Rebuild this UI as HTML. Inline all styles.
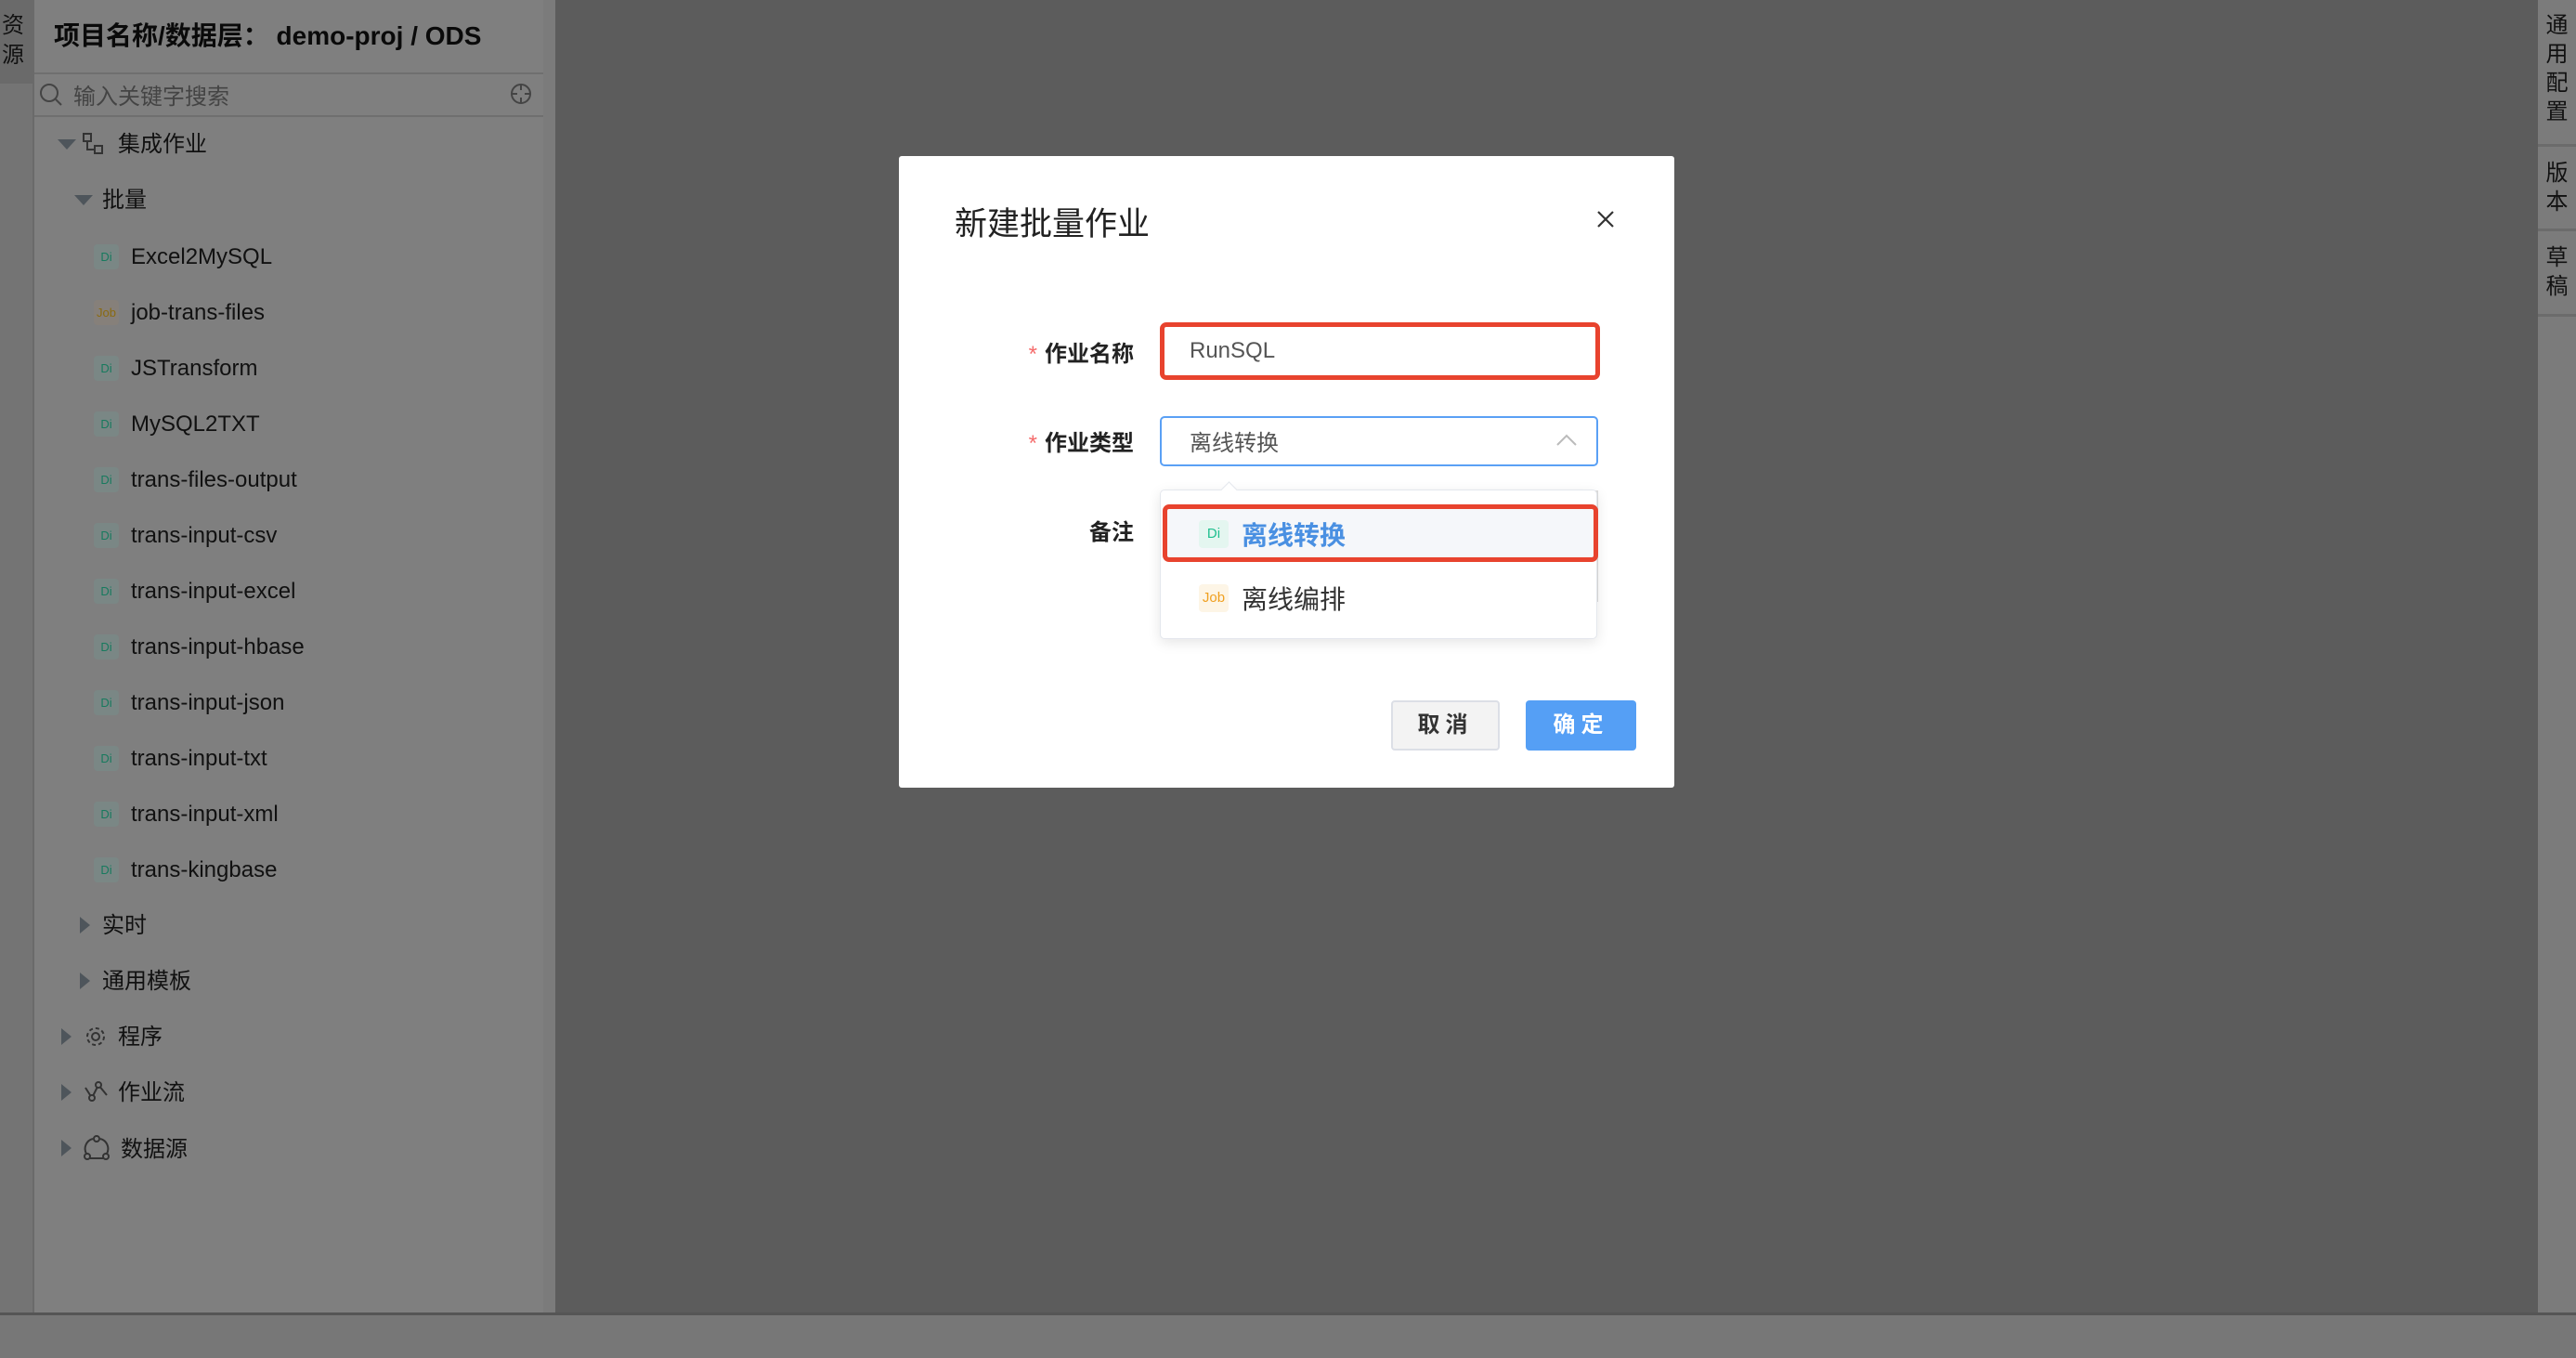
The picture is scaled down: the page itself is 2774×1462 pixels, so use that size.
<!DOCTYPE html>
<html><head><meta charset="utf-8"><style>
*{box-sizing:border-box;margin:0;padding:0}
body{width:2774px;height:1462px;position:relative;overflow:hidden;background:#5c5c5c;font-family:"Liberation Sans","Noto Sans CJK SC",sans-serif;color:#111}
.abs{position:absolute}
.lstrip{left:0;top:0;width:37px;height:1414px;background:#747474;border-right:2px solid #6a6a6a}
.ltab{left:0;top:0;width:37px;height:90px;background:#6a6a6a;font-size:24px;line-height:32px;padding:12px 0 0 2px;color:#111}
.side{left:37px;top:0;width:561px;height:1414px;background:#7f7f7f}
.side .sb{position:absolute;right:0;top:0;width:13px;height:100%;background:#7b7b7b}
.title{left:58px;top:17px;font-size:28px;font-weight:bold;color:#0a0a0a}
.search{left:37px;top:78px;width:548px;height:48px;border-top:2px solid #6f6f6f;border-bottom:2px solid #6f6f6f}
.row{position:absolute;font-size:24px;line-height:30px;color:#111}
.ic{position:absolute;width:27px;height:27px;border-radius:4px;font-size:13px;line-height:27px;text-align:center}
.di{background:#7a8785;color:#177a5e}
.jb{background:#86807a;color:#8a6a10}
.tri{position:absolute;width:0;height:0}
.down{border-left:10px solid transparent;border-right:10px solid transparent;border-top:11px solid #4e555b}
.right{border-top:9px solid transparent;border-bottom:9px solid transparent;border-left:11px solid #4e555b}
.rstrip{left:2733px;top:0;width:41px;height:1414px;background:#7b7b7b}
.rtab{position:absolute;left:0;width:41px;font-size:24px;line-height:31px;text-align:center;border-bottom:3px solid #6b6b6b;color:#111}
.bottom{left:0;top:1413px;width:2774px;height:49px;background:#777;border-top:3px solid #555}
.modal{left:968px;top:168px;width:835px;height:680px;background:#fff;border-radius:3px}
.lbl{position:absolute;font-size:24px;font-weight:bold;color:#222;text-align:right;width:200px}
.lbl b{color:#f56c6c;font-weight:normal;margin-right:8px}
</style></head><body>
<div class="abs lstrip"></div>
<div class="abs ltab">资<br>源</div>
<div class="abs side"><div class="sb"></div></div>
<div class="abs title">项目名称/数据层：&nbsp;demo-proj / ODS</div>
<div class="abs search">
<svg class="abs" style="left:4px;top:8px" width="28" height="28" viewBox="0 0 28 28"><circle cx="12" cy="12" r="9" fill="none" stroke="#444" stroke-width="2"/><path d="M19 19l6 6" stroke="#444" stroke-width="2"/></svg>
<div class="abs" style="left:42px;top:4px;font-size:24px;color:#444">输入关键字搜索</div>
<svg class="abs" style="left:510px;top:7px" width="28" height="28" viewBox="0 0 28 28"><circle cx="14" cy="14" r="10" fill="none" stroke="#444" stroke-width="2"/><path d="M14 4v6M14 18v6M4 14h6M18 14h6" stroke="#444" stroke-width="2"/></svg>
</div>
<div class="tri down" style="left:62px;top:150px"></div>
<svg class="abs" style="left:88px;top:142px" width="26" height="26" viewBox="0 0 26 26"><rect x="2" y="2" width="8" height="8" fill="none" stroke="#333" stroke-width="2"/><rect x="14" y="15" width="8" height="8" fill="none" stroke="#333" stroke-width="2"/><path d="M6 10v9h8" fill="none" stroke="#333" stroke-width="2"/></svg>
<div class="row" style="left:127px;top:141px">集成作业</div>
<div class="tri down" style="left:80px;top:210px"></div>
<div class="row" style="left:110px;top:201px">批量</div>

<div class="ic di" style="left:101px;top:263px">Di</div><div class="row" style="left:141px;top:262px">Excel2MySQL</div>
<div class="ic jb" style="left:101px;top:323px">Job</div><div class="row" style="left:141px;top:322px">job-trans-files</div>
<div class="ic di" style="left:101px;top:383px">Di</div><div class="row" style="left:141px;top:382px">JSTransform</div>
<div class="ic di" style="left:101px;top:443px">Di</div><div class="row" style="left:141px;top:442px">MySQL2TXT</div>
<div class="ic di" style="left:101px;top:503px">Di</div><div class="row" style="left:141px;top:502px">trans-files-output</div>
<div class="ic di" style="left:101px;top:563px">Di</div><div class="row" style="left:141px;top:562px">trans-input-csv</div>
<div class="ic di" style="left:101px;top:623px">Di</div><div class="row" style="left:141px;top:622px">trans-input-excel</div>
<div class="ic di" style="left:101px;top:683px">Di</div><div class="row" style="left:141px;top:682px">trans-input-hbase</div>
<div class="ic di" style="left:101px;top:743px">Di</div><div class="row" style="left:141px;top:742px">trans-input-json</div>
<div class="ic di" style="left:101px;top:803px">Di</div><div class="row" style="left:141px;top:802px">trans-input-txt</div>
<div class="ic di" style="left:101px;top:863px">Di</div><div class="row" style="left:141px;top:862px">trans-input-xml</div>
<div class="ic di" style="left:101px;top:923px">Di</div><div class="row" style="left:141px;top:922px">trans-kingbase</div>

<div class="tri right" style="left:86px;top:987px"></div><div class="row" style="left:110px;top:982px">实时</div>
<div class="tri right" style="left:86px;top:1047px"></div><div class="row" style="left:110px;top:1042px">通用模板</div>
<div class="tri right" style="left:66px;top:1107px"></div>
<svg class="abs" style="left:90px;top:1103px" width="26" height="26" viewBox="0 0 26 26"><circle cx="13" cy="13" r="4" fill="none" stroke="#333" stroke-width="2"/><circle cx="13" cy="13" r="9" fill="none" stroke="#333" stroke-width="2" stroke-dasharray="4 3"/></svg>
<div class="row" style="left:127px;top:1102px">程序</div>
<div class="tri right" style="left:66px;top:1167px"></div>
<svg class="abs" style="left:90px;top:1163px" width="28" height="26" viewBox="0 0 28 26"><path d="M2 8l7 11 7-14 9 11" fill="none" stroke="#333" stroke-width="2"/><circle cx="9" cy="19" r="3" fill="#7f7f7f" stroke="#333" stroke-width="2"/><circle cx="16" cy="5" r="3" fill="#7f7f7f" stroke="#333" stroke-width="2"/></svg>
<div class="row" style="left:127px;top:1162px">作业流</div>
<div class="tri right" style="left:66px;top:1227px"></div>
<svg class="abs" style="left:89px;top:1221px" width="30" height="30" viewBox="0 0 30 30"><path d="M11 5A11 11 0 0 0 4 21M26 21A11 11 0 0 0 19 5M8 26h14" fill="none" stroke="#333" stroke-width="2"/><circle cx="15" cy="5" r="3" fill="none" stroke="#333" stroke-width="2"/><circle cx="5" cy="24" r="3" fill="none" stroke="#333" stroke-width="2"/><circle cx="25" cy="24" r="3" fill="none" stroke="#333" stroke-width="2"/></svg>
<div class="row" style="left:130px;top:1223px">数据源</div>

<div class="abs rstrip">
<div class="rtab" style="top:0;height:158px;padding-top:12px">通<br>用<br>配<br>置</div>
<div class="rtab" style="top:158px;height:91px;padding-top:13px">版<br>本</div>
<div class="rtab" style="top:249px;height:92px;padding-top:13px">草<br>稿</div>
</div>
<div class="abs bottom"></div>

<div class="abs modal">
<div class="abs" style="left:60px;top:45px;font-size:35px;color:#222">新建批量作业</div>
<svg class="abs" style="left:750px;top:57px" width="22" height="22" viewBox="0 0 22 22"><path d="M3 3l16 16M19 3L3 19" stroke="#333" stroke-width="2.2"/></svg>
<div class="lbl" style="left:53px;top:193px"><b>*</b>作业名称</div>
<div class="abs" style="left:281px;top:179px;width:474px;height:62px;border:5px solid #e8432e;border-radius:7px;font-size:24px;color:#555;padding:12px 0 0 27px">RunSQL</div>
<div class="lbl" style="left:53px;top:289px"><b>*</b>作业类型</div>
<div class="abs" style="left:281px;top:280px;width:472px;height:54px;border:2px solid #5aa0f5;border-radius:5px;font-size:24px;color:#555;padding:7px 0 0 30px">离线转换</div>
<svg class="abs" style="left:707px;top:298px" width="24" height="16" viewBox="0 0 24 16"><path d="M2 13L12 3l10 10" fill="none" stroke="#bbb" stroke-width="2"/></svg>
<div class="lbl" style="left:53px;top:385px">备注</div>
<div class="abs" style="left:749px;top:360px;width:4px;height:120px;background:#ddd"></div>
<div class="abs" style="left:281px;top:359px;width:471px;height:161px;border:1px solid #e4e7ed;border-radius:5px;background:#fff;box-shadow:0 4px 14px rgba(0,0,0,.1)"></div>
<div class="abs" style="left:349px;top:353px;width:13px;height:13px;background:#fff;border-left:1px solid #e4e7ed;border-top:1px solid #e4e7ed;transform:rotate(45deg)"></div>
<div class="abs" style="left:284px;top:375px;width:469px;height:62px;border:5px solid #e8432e;border-radius:7px;background:#f5f7fa"></div>
<div class="ic" style="left:323px;top:392px;width:32px;height:30px;line-height:30px;background:#e4f6f0;color:#1fbf8f;font-size:15px">Di</div>
<div class="abs" style="left:369px;top:387px;font-size:28px;font-weight:bold;color:#4a90e2">离线转换</div>
<div class="ic" style="left:323px;top:461px;width:32px;height:30px;line-height:30px;background:#fdf5e6;color:#f0a020;font-size:15px">Job</div>
<div class="abs" style="left:369px;top:456px;font-size:28px;color:#333">离线编排</div>
<div class="abs" style="left:530px;top:586px;width:117px;height:54px;border:2px solid #dcdfe6;border-radius:4px;background:#f3f3f3;font-size:24px;font-weight:bold;color:#333;text-align:center;line-height:50px;letter-spacing:6px">取消</div>
<div class="abs" style="left:675px;top:586px;width:119px;height:54px;border-radius:4px;background:#559ff5;font-size:24px;font-weight:bold;color:#fff;text-align:center;line-height:54px;letter-spacing:6px">确定</div>
</div>
</body></html>
